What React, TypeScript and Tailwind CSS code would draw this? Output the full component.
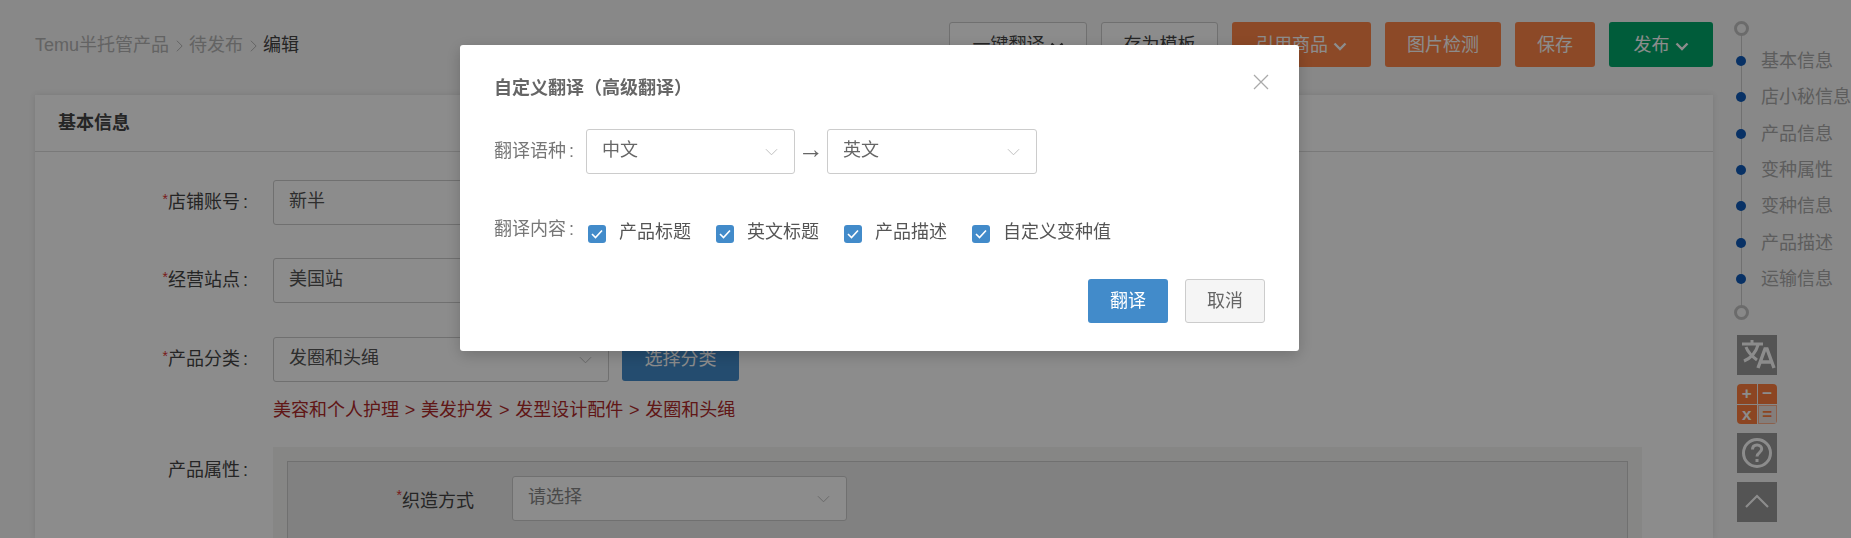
import React from "react";

const Chevron = ({ className = "" }: { className?: string }) => (
  <svg viewBox="0 0 14 8" className={className} fill="none" stroke="currentColor" strokeWidth="1">
    <path d="M1 1l6 6 6-6" />
  </svg>
);

const BoldChevron = () => (
  <svg viewBox="0 0 14 9" className="w-[14px] h-[9px] ml-[5px] mt-[2px]" fill="none" stroke="currentColor" strokeWidth="2.4">
    <path d="M1.5 1.5l5.5 5.5 5.5-5.5" />
  </svg>
);

const Crumb = () => (
  <svg viewBox="0 0 8 14" className="w-[7px] h-[14px] mx-[6.5px] text-[#b0b0b0]" fill="none" stroke="currentColor" strokeWidth="1">
    <path d="M1 1l6 6-6 6" />
  </svg>
);

const TopBtn = ({ w, cls, label, drop }: { w: string; cls: string; label: string; drop?: boolean }) => (
  <button className={`h-[45px] ${w} ${cls} rounded-[3px] flex items-center justify-center text-[18px] pt-[2px]`}>
    {label}
    {drop && <BoldChevron />}
  </button>
);

const Select = ({ w, text, muted, chevron }: { w: string; text: string; muted?: boolean; chevron?: boolean }) => (
  <div className={`${w} h-[45px] border border-[#ccc] rounded-[3px] bg-white flex items-center justify-between pl-[15px] pr-[16px] text-[18px] ${muted ? "text-[#888]" : "text-[#555]"}`}>
    <span className="-mt-[3px]">{text}</span>
    {chevron && <Chevron className="w-[13px] h-[8px] text-[#bbb]" />}
  </div>
);

const FormRow = ({ label, req, className = "", labelClass = "", children }: { label: string; req?: boolean; className?: string; labelClass?: string; children: React.ReactNode }) => (
  <div className={`flex items-start ${className}`}>
    <div className={`w-[237px] pr-[25px] h-[45px] flex items-center justify-end text-[18px] text-[#444] ${labelClass}`}>
      {req && <span className="text-[#d33] text-[14px] -mt-[6px]">*</span>}
      <span>{label}</span>
      <span className="ml-[3px]">:</span>
    </div>
    {children}
  </div>
);

const Check = ({ label, gap }: { label: string; gap: string }) => (
  <div className={`flex items-center ${gap}`}>
    <span className="w-[18px] h-[18px] rounded-[3px] bg-[#428bca] flex items-center justify-center mt-[2px]">
      <svg viewBox="0 0 12 10" className="w-[12px] h-[10px]" fill="none" stroke="#fff" strokeWidth="1.6">
        <path d="M1 5l3.5 3.5L11 1.5" />
      </svg>
    </span>
    <span className="ml-[13px] text-[18px] text-[#555] leading-[26px] -mt-[2px]">{label}</span>
  </div>
);

const nav = ["基本信息", "店小秘信息", "产品信息", "变种属性", "变种信息", "产品描述", "运输信息"];

const Ring = ({ className = "" }: { className?: string }) => (
  <span className={`relative block w-[15px] h-[15px] rounded-full border-[3px] border-[#c4c4c4] bg-[#f7f7f7] ml-[21px] ${className}`} />
);

const IconBox = ({ children, className = "" }: { children: React.ReactNode; className?: string }) => (
  <div className={`w-[40px] h-[40px] bg-[#999] flex items-center justify-center text-white ${className}`}>{children}</div>
);

export default function App() {
  return (
    <div className="relative w-full h-[538px] overflow-hidden bg-[#f7f7f7] flex font-['Liberation_Sans','Noto_Sans_CJK_SC',sans-serif]">
      <div className="w-[1678px] ml-[35px] shrink-0">
        <div className="h-[95px] pt-[22px] flex justify-between">
          <div className="flex items-center h-[45px] text-[18px] text-[#b4b4b4] mt-[1px]">
            <span>Temu半托管产品</span>
            <Crumb />
            <span>待发布</span>
            <Crumb />
            <span className="text-[#444]">编辑</span>
          </div>
          <div className="flex">
            <TopBtn w="w-[138px]" cls="bg-white border border-[#ccc] text-[#444]" label="一键翻译" drop />
            <TopBtn w="w-[117px] ml-[14px]" cls="bg-white border border-[#ccc] text-[#444]" label="存为模板" />
            <TopBtn w="w-[139px] ml-[14px]" cls="bg-[#ff8547] text-white" label="引用商品" drop />
            <TopBtn w="w-[116px] ml-[14px]" cls="bg-[#ff8547] text-white" label="图片检测" />
            <TopBtn w="w-[80px] ml-[14px]" cls="bg-[#ff8547] text-white" label="保存" />
            <TopBtn w="w-[104px] ml-[14px]" cls="bg-[#00a86b] text-white" label="发布" drop />
          </div>
        </div>
        <div className="bg-white h-[443px] shadow-[0_0_6px_rgba(0,0,0,0.1)] overflow-hidden">
          <div className="h-[57px] pl-[23px] flex items-center border-b border-[#ddd] text-[18px] font-bold text-[#444]">基本信息</div>
          <div className="pt-[28px] pl-[1px]">
            <FormRow label="店铺账号" req>
              <Select w="w-[336px]" text="新半" />
            </FormRow>
            <FormRow label="经营站点" req className="mt-[33px]">
              <Select w="w-[336px]" text="美国站" />
            </FormRow>
            <FormRow label="产品分类" req className="mt-[34px]">
              <div>
                <div className="flex">
                  <Select w="w-[336px]" text="发圈和头绳" chevron />
                  <button className="ml-[13px] w-[117px] h-[44px] rounded-[3px] bg-[#428bca] text-white text-[18px]">选择分类</button>
                </div>
                <div className="mt-[15px] text-[18px] leading-[26px] text-[#b02a2a] [word-spacing:0.8px]">美容和个人护理 &gt; 美发护发 &gt; 发型设计配件 &gt; 发圈和头绳</div>
              </div>
            </FormRow>
            <FormRow label="产品属性" className="mt-[24px]" labelClass="pt-[1px]">
              <div className="w-[1369px] h-[200px] bg-[#f5f5f2] pt-[14px] px-[14px]">
                <div className="h-[200px] bg-[#ebebeb] border border-[#ccc] pt-[14px] flex items-start">
                  <div className="w-[186px] h-[45px] flex items-center justify-end text-[18px] text-[#444]">
                    <span className="text-[#d33] text-[14px] -mt-[6px]">*</span>
                    <span className="mt-[6px]">织造方式</span>
                  </div>
                  <Select w="w-[335px] ml-[38px] bg-[#f0f0f0]" text="请选择" muted chevron />
                </div>
              </div>
            </FormRow>
          </div>
        </div>
      </div>

      <div className="relative w-[138px] shrink-0 pt-[21px]">
        <span className="absolute left-[28px] top-[28px] h-[284px] w-px bg-[#ccc]" />
        <Ring />
        <div className="relative mt-[7px]">
          {nav.map((n) => (
            <div key={n} className="h-[36.3px] flex items-center">
              <span className="w-[10px] h-[10px] rounded-full bg-[#0f5ab8] ml-[23px]" />
              <span className="ml-[15px] text-[18px] text-[#aaa] whitespace-nowrap pt-[1px]">{n}</span>
            </div>
          ))}
        </div>
        <Ring className="mt-[8px]" />
        <div className="ml-[24px] mt-[15px] flex flex-col gap-[9px]">
          <IconBox>
            <svg viewBox="0 0 40 40" className="w-[40px] h-[40px]" fill="none" stroke="currentColor" strokeWidth="3">
              <path d="M5 9h21M15 5v4M21 10c-2 7-7 13-14 16M9 12c2 6 7 10 11 13" />
              <path d="M21 33l7-19h2l7 19M24 27h10" strokeWidth="3.4" />
            </svg>
          </IconBox>
          <div className="w-[40px] h-[40px] grid grid-cols-2 grid-rows-2 gap-px rounded-[4px] overflow-hidden text-white font-bold text-[17px] leading-none">
            <span className="bg-[#ff7f3f] flex items-center justify-center">+</span>
            <span className="bg-[#ff7f3f] flex items-center justify-center">−</span>
            <span className="bg-[#ff7f3f] flex items-center justify-center">x</span>
            <span className="bg-[#f0e6e0] border border-[#ffb08a] flex items-center justify-center text-[#ff7f3f]">=</span>
          </div>
          <IconBox>
            <svg viewBox="0 0 40 40" className="w-[40px] h-[40px]" fill="none" stroke="currentColor" strokeWidth="3">
              <circle cx="20" cy="20" r="13.5" />
              <path d="M15.5 16.5c0-3 2-4.6 4.6-4.6s4.6 1.7 4.6 4.2c0 3.6-4.7 3.5-4.7 7.4" />
              <path d="M20 26v3" />
            </svg>
          </IconBox>
          <IconBox>
            <svg viewBox="0 0 40 40" className="w-[40px] h-[40px]" fill="none" stroke="currentColor" strokeWidth="2.2">
              <path d="M9 25l11-11 11 11" />
            </svg>
          </IconBox>
        </div>
      </div>

      <div className="fixed inset-0 bg-black/45">
        <div className="relative w-[839px] h-[306px] ml-[460px] mt-[45px] bg-white rounded-[3px] pl-[34px] shadow-[0_4px_16px_rgba(0,0,0,0.2)]">
          <button className="absolute right-[30px] top-[29px] text-[#aaa]">
            <svg viewBox="0 0 16 16" className="w-[16px] h-[16px]" fill="none" stroke="currentColor" strokeWidth="1.3">
              <path d="M1 1l14 14M15 1L1 15" />
            </svg>
          </button>
          <div className="pt-[30px] h-[84px] text-[18px] leading-[26px] font-bold text-[#666]">自定义翻译（高级翻译）</div>
          <div className="flex items-center h-[45px]">
            <div className="w-[92px] text-[18px] text-[#777]">翻译语种<span className="ml-[3px]">:</span></div>
            <Select w="w-[209px] text-[#666]" text="中文" chevron />
            <span className="w-[32px] text-center text-[26px] text-[#666] leading-none -mt-[6px]">→</span>
            <Select w="w-[210px] text-[#666]" text="英文" chevron />
          </div>
          <div className="flex items-center h-[26px] mt-[46px]">
            <div className="w-[94px] text-[18px] text-[#777] -mt-[8px]">翻译内容<span className="ml-[3px]">:</span></div>
            <Check label="产品标题" gap="" />
            <Check label="英文标题" gap="ml-[25px]" />
            <Check label="产品描述" gap="ml-[25px]" />
            <Check label="自定义变种值" gap="ml-[25px]" />
          </div>
          <div className="flex justify-end gap-[17px] pr-[34px] mt-[33px]">
            <button className="w-[80px] h-[44px] rounded-[3px] bg-[#428bca] text-white text-[18px]">翻译</button>
            <button className="w-[80px] h-[44px] rounded-[3px] bg-[#f5f5f5] border border-[#ccc] text-[#666] text-[18px]">取消</button>
          </div>
        </div>
      </div>
    </div>
  );
}
